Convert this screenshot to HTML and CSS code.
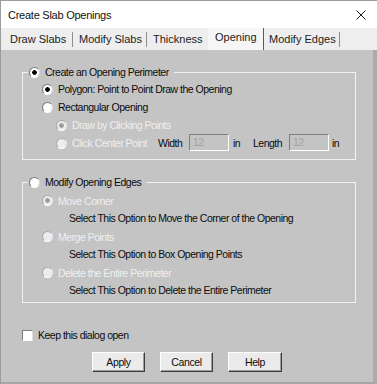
FILE: index.html
```html
<!DOCTYPE html>
<html>
<head>
<meta charset="utf-8">
<title>Create Slab Openings</title>
<link rel="stylesheet" href="styles.css">
</head>
<body>
<div class="window">
  <div class="titlebar">
    <span class="title">Create Slab Openings</span>
    <svg class="close" width="10" height="10" viewBox="0 0 10 10"><path d="M0.5 0.5L9.5 9.5M9.5 0.5L0.5 9.5" stroke="#1e1e1e" stroke-width="1"/></svg>
  </div>
  <div class="tabs">
    <div class="tab tab-draw">Draw Slabs</div>
    <div class="tab tab-modify">Modify Slabs</div>
    <div class="tab tab-thick">Thickness</div>
    <div class="tab tab-open active">Opening</div>
    <div class="tab tab-edges">Modify Edges</div>
  </div>
  <div class="page">
    <fieldset class="group group-create">
      <legend class="legend"><span class="radio on"></span>Create an Opening Perimeter</legend>
      <div class="row l1"><span class="radio on"></span>Polygon: Point to Point Draw the Opening</div>
      <div class="row l1"><span class="radio"></span>Rectangular Opening</div>
      <div class="row l2"><span class="radio dis on"></span><span class="dis-text">Draw by Clicking Points</span></div>
      <div class="row l2">
        <span class="radio dis"></span><span class="dis-text center-label">Click Center Point</span>
        <span class="field-label width-label">Width</span><span class="input">12</span><span class="unit unit-w">in</span>
        <span class="field-label length-label">Length</span><span class="input">12</span><span class="unit unit-l">in</span>
      </div>
    </fieldset>
    <fieldset class="group group-edges">
      <legend class="legend"><span class="radio"></span>Modify Opening Edges</legend>
      <div class="row2 l1"><span class="radio dis on"></span><span class="dis-text">Move Corner</span></div>
      <div class="row2 desc">Select This Option to Move the Corner of the Opening</div>
      <div class="row2 l1 spaced"><span class="radio dis"></span><span class="dis-text">Merge Points</span></div>
      <div class="row2 desc">Select This Option to Box Opening Points</div>
      <div class="row2 l1 spaced"><span class="radio dis"></span><span class="dis-text">Delete the Entire Perimeter</span></div>
      <div class="row2 desc">Select This Option to Delete the Entire Perimeter</div>
    </fieldset>
    <div class="check-row"><span class="check"></span>Keep this dialog open</div>
    <div class="buttons">
      <button class="btn">Apply</button>
      <button class="btn">Cancel</button>
      <button class="btn btn-help">Help</button>
    </div>
  </div>
</div>
</body>
</html>
```
FILE: styles.css
```css
body {
  margin: 0;
  background: #ffffff;
  font-family: "Liberation Sans", Arial, sans-serif;
}

.window {
  width: 377px;
  height: 384px;
  box-sizing: border-box;
  border-top: 1px solid #9c9c9c;
  border-left: 1px solid #9c9c9c;
  display: flex;
  flex-direction: column;
  overflow: hidden;
  background: #ffffff;
}

.titlebar {
  height: 27px;
  flex: none;
  display: flex;
  align-items: center;
  justify-content: space-between;
  padding: 0 11px 0 7px;
  background: #ffffff;
}

.title {
  font-size: 11px;
  letter-spacing: -0.25px;
  color: #111;
  padding-top: 1px;
}

.close {
  display: block;
}

.tabs {
  height: 22px;
  flex: none;
  display: flex;
  align-items: flex-end;
  background: #eeeeee;
  padding-left: 3px;
}

.tab {
  height: 15px;
  margin-bottom: 3px;
  box-sizing: border-box;
  font-size: 11px;
  line-height: 15px;
  color: #1c1c1c;
  padding-left: 6px;
  border-right: 1px solid #8e8e8e;
  white-space: nowrap;
}

.tab-draw { width: 69px; }
.tab-modify { width: 74px; }
.tab-thick { width: 61px; border-right: none; }
.tab-open { width: 56px; padding-left: 7px; }
.tab-edges { width: 76px; padding-left: 5px; }

.tab.active {
  height: 22px;
  margin-bottom: 0;
  padding-top: 2px;
  background: #f6f6f6;
  border-right: 1px solid #5a5a5a;
}

.page {
  flex: 1;
  background: #c4c4c4;
  border-right: 4px solid #acacac;
  border-bottom: 2px solid #a6a6a6;
  padding-top: 15px;
  display: flex;
  flex-direction: column;
  font-size: 10.5px;
  letter-spacing: -0.5px;
  color: #0c0c0c;
}

.group {
  margin: 0 17px 0 21px;
  border: 1px solid #f2f2f2;
  min-width: 0;
}

.group-create {
  padding: 1px 0 7px 0;
}

.group-edges {
  margin-top: 15px;
  padding: 3px 0 4px 0;
}

.legend {
  margin-left: 5px;
  padding: 0 5px 0 1px;
  height: 14px;
  line-height: 14px;
  display: flex;
  align-items: center;
  white-space: nowrap;
}

.row {
  height: 18px;
  display: flex;
  align-items: center;
  white-space: nowrap;
}

.row2 {
  height: 17px;
  display: flex;
  align-items: center;
  white-space: nowrap;
}

.row2.spaced {
  margin-top: 2px;
}

.l1 { padding-left: 19px; }
.l2 { padding-left: 33px; }
.desc { padding-left: 46px; }

.radio {
  flex: none;
  width: 11px;
  height: 11px;
  box-sizing: border-box;
  border-radius: 50%;
  border: 1px solid;
  border-color: #7a7a7a #d8d8d8 #ffffff #7a7a7a;
  background: #ffffff;
  margin-right: 5px;
}

.radio.on {
  background: radial-gradient(circle, #000000 0, #000000 2px, #ffffff 2.6px);
}

.radio.dis {
  border-color: #a9a9a9 #e6e6e6 #ffffff #a9a9a9;
  background: #ececec;
}

.radio.dis.on {
  background: radial-gradient(circle, #9c9c9c 0, #9c9c9c 2px, #ececec 2.6px);
}

.dis-text {
  color: #efefef;
}

.center-label {
  width: 86px;
  flex: none;
}

.field-label {
  flex: none;
  color: #0c0c0c;
}

.width-label { width: 31px; }
.length-label { width: 36px; }

.input {
  flex: none;
  width: 40px;
  height: 17px;
  box-sizing: border-box;
  border: 1px solid;
  border-color: #7e7e7e #ffffff #ffffff #7e7e7e;
  background: #c4c4c4;
  color: #a2a2a2;
  padding-left: 3px;
  line-height: 15px;
  margin-top: -2px;
}

.unit {
  flex: none;
}

.unit-w {
  margin-left: 4px;
  width: 20px;
}

.unit-l {
  margin-left: 3px;
}

.check-row {
  margin: 25px 0 0 21px;
  height: 14px;
  display: flex;
  align-items: center;
  white-space: nowrap;
}

.check {
  flex: none;
  width: 11px;
  height: 11px;
  box-sizing: border-box;
  border: 1px solid;
  border-color: #7e7e7e #e0e0e0 #ffffff #7e7e7e;
  background: #ffffff;
  margin-right: 5px;
}

.buttons {
  margin-top: 10px;
  display: flex;
  justify-content: center;
  gap: 15px;
}

.btn {
  width: 53px;
  height: 20px;
  box-sizing: border-box;
  margin: 0;
  padding: 0;
  border: 1px solid;
  border-color: #ffffff #3c3c3c #3c3c3c #ffffff;
  box-shadow: inset -1px -1px 0 #9e9e9e;
  background: #ebebeb;
  font-family: "Liberation Sans", Arial, sans-serif;
  font-size: 10.5px;
  letter-spacing: -0.4px;
  color: #0c0c0c;
  text-align: center;
  line-height: 18px;
}

.btn-help {
  width: 54px;
}
```
